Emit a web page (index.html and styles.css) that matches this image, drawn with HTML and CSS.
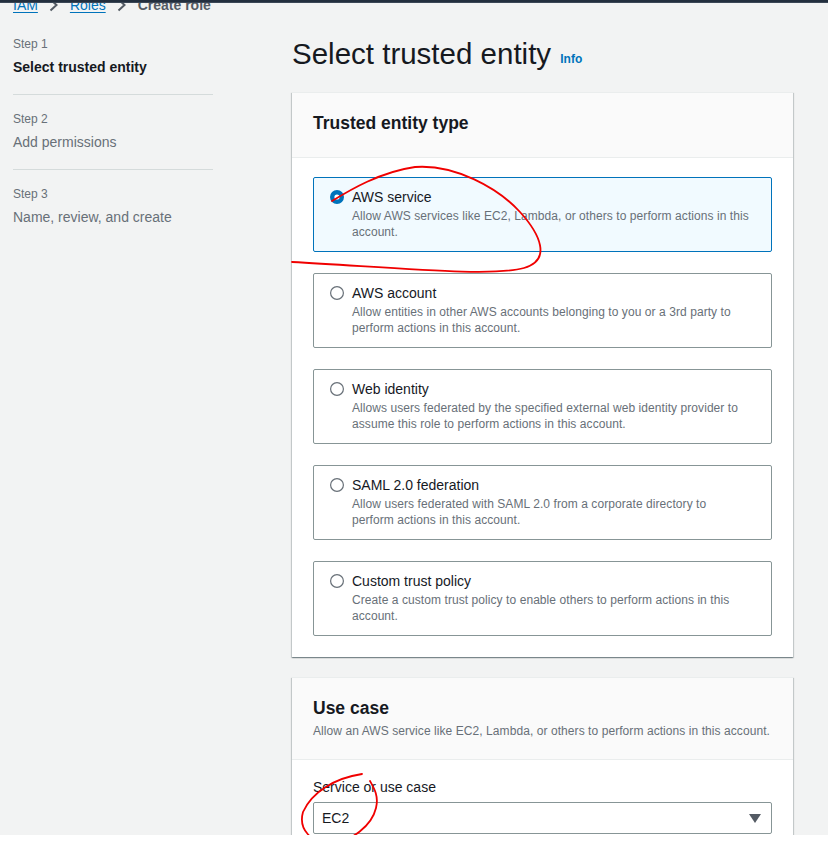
FILE: index.html
```html
<!DOCTYPE html>
<html lang="en">
<head>
<meta charset="utf-8">
<title>Create role - IAM</title>
<link rel="stylesheet" href="styles.css">
</head>
<body>
<div class="page">
  <div class="topbar"></div>
  <nav class="crumbs">
    <a class="crumb-link" href="#">IAM</a>
    <svg class="chev" viewBox="0 0 16 16" width="16" height="16"><path d="M4.5 2.5 L10.5 8 L4.5 13.5" fill="none" stroke="#545b64" stroke-width="2"/></svg>
    <a class="crumb-link" href="#">Roles</a>
    <svg class="chev" viewBox="0 0 16 16" width="16" height="16"><path d="M4.5 2.5 L10.5 8 L4.5 13.5" fill="none" stroke="#545b64" stroke-width="2"/></svg>
    <span class="crumb-current">Create role</span>
  </nav>

  <div class="layout">
    <aside class="steps">
      <div class="step">
        <div class="step-label">Step 1</div>
        <div class="step-title active">Select trusted entity</div>
      </div>
      <div class="step">
        <div class="step-label">Step 2</div>
        <div class="step-title">Add permissions</div>
      </div>
      <div class="step last">
        <div class="step-label">Step 3</div>
        <div class="step-title">Name, review, and create</div>
      </div>
    </aside>

    <main class="main">
      <h1 class="title">Select trusted entity <a class="info" href="#">Info</a></h1>

      <section class="card">
        <div class="card-header">
          <h2 class="card-title">Trusted entity type</h2>
        </div>
        <div class="card-body tiles">
          <label class="tile selected">
            <svg class="radio" viewBox="0 0 14 14" width="14" height="14"><circle cx="7" cy="7" r="4.8" fill="#fff" stroke="#0073bb" stroke-width="4.4"/></svg>
            <span class="tile-text">
              <span class="tile-title">AWS service</span>
              <span class="tile-desc">Allow AWS services like EC2, Lambda, or others to perform actions in this account.</span>
            </span>
          </label>
          <label class="tile">
            <svg class="radio" viewBox="0 0 14 14" width="14" height="14"><circle cx="7" cy="7" r="6.4" fill="#fff" stroke="#687078" stroke-width="1.2"/></svg>
            <span class="tile-text">
              <span class="tile-title">AWS account</span>
              <span class="tile-desc">Allow entities in other AWS accounts belonging to you or a 3rd party to perform actions in this account.</span>
            </span>
          </label>
          <label class="tile">
            <svg class="radio" viewBox="0 0 14 14" width="14" height="14"><circle cx="7" cy="7" r="6.4" fill="#fff" stroke="#687078" stroke-width="1.2"/></svg>
            <span class="tile-text">
              <span class="tile-title">Web identity</span>
              <span class="tile-desc">Allows users federated by the specified external web identity provider to assume this role to perform actions in this account.</span>
            </span>
          </label>
          <label class="tile">
            <svg class="radio" viewBox="0 0 14 14" width="14" height="14"><circle cx="7" cy="7" r="6.4" fill="#fff" stroke="#687078" stroke-width="1.2"/></svg>
            <span class="tile-text">
              <span class="tile-title">SAML 2.0 federation</span>
              <span class="tile-desc">Allow users federated with SAML 2.0 from a corporate directory to perform actions in this account.</span>
            </span>
          </label>
          <label class="tile">
            <svg class="radio" viewBox="0 0 14 14" width="14" height="14"><circle cx="7" cy="7" r="6.4" fill="#fff" stroke="#687078" stroke-width="1.2"/></svg>
            <span class="tile-text">
              <span class="tile-title">Custom trust policy</span>
              <span class="tile-desc">Create a custom trust policy to enable others to perform actions in this account.</span>
            </span>
          </label>
        </div>
      </section>

      <section class="card card2">
        <div class="card-header header2">
          <h2 class="card-title">Use case</h2>
          <p class="card-desc">Allow an AWS service like EC2, Lambda, or others to perform actions in this account.</p>
        </div>
        <div class="card-body body2">
          <div class="field-label">Service or use case</div>
          <div class="select">
            <span class="select-value">EC2</span>
            <svg class="caret" viewBox="0 0 12 9" width="12" height="9"><path d="M0 0 H12 L6 9 Z" fill="#545b64"/></svg>
          </div>
        </div>
      </section>
    </main>
  </div>

  <svg class="ink" viewBox="0 0 828 845" width="828" height="845">
    <path d="M332 201 C 350 190, 380 172, 415 167 C 455 164, 498 188, 520 212 C 540 234, 552 260, 524 268 C 492 277, 400 268, 292 262" fill="none" stroke="#f00000" stroke-width="1.8" stroke-linecap="round"/>
    <path d="M362 774 C 335 778, 312 792, 303 812 C 298 830, 312 843, 330 843 C 352 842, 372 825, 376 808 C 379 796, 374 788, 370 781" fill="none" stroke="#f00000" stroke-width="1.8" stroke-linecap="round"/>
  </svg>
</div>
<div class="bottom-band"></div>
</body>
</html>
```

FILE: styles.css
```css
* { box-sizing: border-box; }

html, body {
  margin: 0;
  padding: 0;
  background: #ffffff;
}

body {
  font-family: "Liberation Sans", Arial, sans-serif;
  color: #16191f;
  width: 828px;
}

.page {
  position: relative;
  height: 835px;
  overflow: hidden;
  background: #f2f3f3;
}

.bottom-band {
  height: 10px;
  background: #ffffff;
}

.topbar {
  position: absolute;
  top: 0;
  left: 0;
  right: 0;
  height: 3px;
  background: #232f3e;
  border-bottom: 1px solid #3b4756;
  z-index: 2;
}

.crumbs {
  display: flex;
  align-items: center;
  margin-top: -5px;
  padding-left: 13px;
  height: 20px;
  font-size: 14px;
  line-height: 20px;
}

.crumb-link {
  color: #0073bb;
  text-decoration: underline;
  text-underline-offset: 2px;
}

.crumb-current {
  color: #545b64;
  font-weight: 700;
}

.chev {
  margin: 0 8px;
  display: block;
}

.layout {
  display: flex;
  margin-top: 5px;
}

.steps {
  width: 200px;
  margin-left: 13px;
}

.step {
  padding: 16px 0 17px;
  border-bottom: 1px solid #d5dbdb;
}

.step.last {
  border-bottom: none;
}

.step-label {
  font-size: 12px;
  line-height: 16px;
  color: #687078;
}

.step-title {
  margin-top: 5px;
  font-size: 14px;
  line-height: 20px;
  color: #687078;
}

.step-title.active {
  color: #16191f;
  font-weight: 700;
}

.main {
  margin-left: 79px;
  width: 501px;
}

.title {
  margin: 16px 0 20px 0;
  font-size: 29.5px;
  line-height: 36px;
  font-weight: 400;
  color: #16191f;
}

.info {
  font-size: 12px;
  line-height: 1;
  font-weight: 700;
  color: #0073bb;
  text-decoration: none;
  margin-left: 1px;
  vertical-align: 1px;
}

.card {
  background: #ffffff;
  border-top: 1px solid #eaeded;
  box-shadow: 0 1px 1px 0 rgba(0, 28, 36, 0.3), 1px 1px 1px 0 rgba(0, 28, 36, 0.15), -1px 1px 1px 0 rgba(0, 28, 36, 0.15);
}

.card2 {
  margin-top: 20px;
}

.card-header {
  background: #fafafa;
  border-bottom: 1px solid #eaeded;
  padding: 18px 21px 22px;
}

.header2 {
  padding: 18px 21px 20px;
}

.card-title {
  margin: 0;
  font-size: 17.5px;
  line-height: 24px;
  font-weight: 700;
  color: #16191f;
}

.card-desc {
  margin: 3px 0 0;
  font-size: 12px;
  line-height: 16px;
  color: #687078;
  letter-spacing: 0.07px;
}

.card-body {
  padding: 19px 21px 21px;
}

.tiles {
  display: flex;
  flex-direction: column;
  gap: 21px;
}

.tile {
  display: flex;
  align-items: flex-start;
  gap: 8px;
  height: 75px;
  padding: 9px 16px 11px;
  border: 1px solid #879596;
  border-radius: 2px;
  background: #ffffff;
}

.tile.selected {
  background: #f1faff;
  border-color: #0073bb;
}

.radio {
  flex: none;
  margin-top: 3px;
  display: block;
}

.tile-text {
  display: flex;
  flex-direction: column;
}

.tile-title {
  font-size: 14px;
  line-height: 20px;
  color: #16191f;
}

.tile-desc {
  margin-top: 1px;
  max-width: 399px;
  font-size: 12px;
  line-height: 16px;
  letter-spacing: 0.07px;
  color: #687078;
}

.body2 {
  padding: 17px 21px 20px;
}

.field-label {
  font-size: 14px;
  line-height: 20px;
  color: #16191f;
}

.select {
  margin-top: 5px;
  height: 32px;
  border: 1px solid #879596;
  border-radius: 2px;
  background: #ffffff;
  display: flex;
  align-items: center;
  justify-content: space-between;
  padding: 0 10px 0 8px;
}

.select-value {
  font-size: 14px;
  line-height: 20px;
  color: #16191f;
}

.caret {
  display: block;
}

.ink {
  position: absolute;
  top: 0;
  left: 0;
  pointer-events: none;
  z-index: 3;
  overflow: visible;
}
```
